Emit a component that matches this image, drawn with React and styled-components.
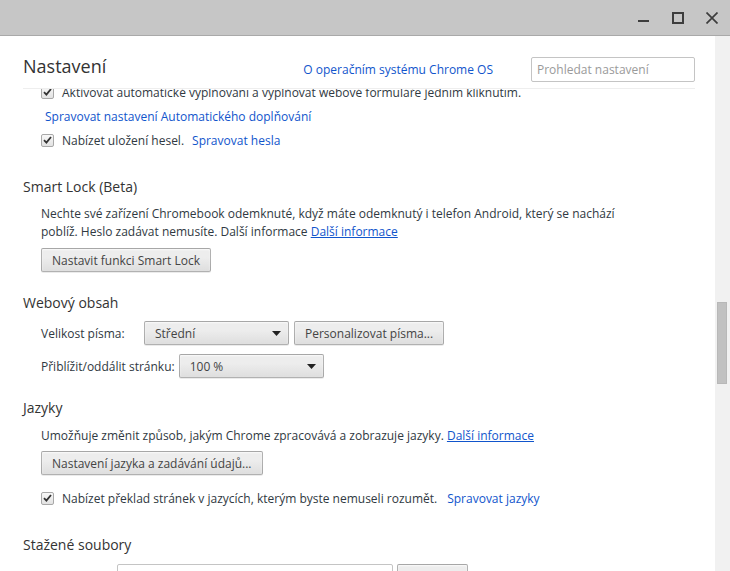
import React from 'react';
import styled, { createGlobalStyle } from 'styled-components';

const Global = createGlobalStyle`
  html, body { margin: 0; padding: 0; width: 730px; height: 571px; overflow: hidden; background: #fff; }
  body { font-family: "Open Sans", "Noto Sans", sans-serif; font-size: 12px; color: #303942; }
  * { box-sizing: border-box; }
`;

const Window = styled.div`
  width: 730px;
  height: 571px;
  display: flex;
  flex-direction: column;
  overflow: hidden;
`;

const TitleBar = styled.div`
  flex: none;
  height: 36px;
  background: #c6c6c6;
  border-bottom: 1px solid #a9a9a9;
  display: flex;
  justify-content: flex-end;
  align-items: center;
  padding-right: 1px;
`;

const WinButton = styled.div`
  width: 34px;
  height: 35px;
  display: flex;
  align-items: center;
  justify-content: center;
  color: #3d3d3d;
`;

const Main = styled.div`
  flex: 1;
  min-height: 0;
  display: flex;
`;

const Content = styled.div`
  flex: 1;
  min-width: 0;
  display: flex;
  flex-direction: column;
  overflow: hidden;
`;

const Header = styled.header`
  flex: none;
  height: 53px;
  margin: 0 20px 0 23px;
  padding-top: 21px;
  border-bottom: 1px solid #eeeeee;
  display: flex;
  align-items: flex-start;
  background: #fff;
  position: relative;
  z-index: 1;
`;

const Title = styled.h1`
  margin: -3px 0 0;
  font-size: 18px;
  font-weight: 400;
  line-height: 25px;
  color: #333;
`;

const HeaderLink = styled.a`
  margin-left: auto;
  line-height: 25px;
  color: #15c;
  text-decoration: none;
`;

const Search = styled.input`
  margin-left: 38px;
  width: 164px;
  height: 25px;
  border: 1px solid #c4c4c4;
  border-radius: 2px;
  padding: 0 5px;
  font: inherit;
  font-size: 12px;
  color: #333;
  outline: none;
  &::placeholder { color: #9a9a9a; }
`;

const Scroller = styled.div`
  flex: 1;
  min-height: 0;
  overflow: hidden;
`;

const Inner = styled.div`
  margin-top: -9px;
`;

const Section = styled.section`
  padding-top: ${p => p.$top || 0}px;
`;

const SectionTitle = styled.h3`
  margin: 0 0 ${p => p.$gap || 8}px 23px;
  font-size: 14px;
  font-weight: 400;
  line-height: 20px;
  color: #333;
`;

const Body = styled.div`
  padding-left: 41px;
  display: flex;
  flex-direction: column;
  align-items: flex-start;
`;

const CheckRow = styled.div`
  display: flex;
  align-items: center;
  height: ${p => p.$h || 24}px;
  margin-top: ${p => p.$mt || 0}px;
  white-space: nowrap;
`;

const Box = styled.span`
  flex: none;
  width: 13px;
  height: 13px;
  margin-right: 8px;
  border: 1px solid #a8a8a8;
  border-radius: 2px;
  background: linear-gradient(#f8f8f8, #e2e2e2);
  display: flex;
  align-items: center;
  justify-content: center;
`;

const Link = styled.a`
  color: #15c;
  text-decoration: ${p => (p.$underline ? 'underline' : 'none')};
  margin-left: ${p => p.$ml || 0}px;
  white-space: nowrap;
`;

const LinkRow = styled.div`
  height: ${p => p.$h || 23}px;
  display: flex;
  align-items: center;
  margin-left: 4px;
`;

const Para = styled.p`
  margin: 0;
  max-width: 600px;
  line-height: 18px;
`;

const Button = styled.button`
  height: 24px;
  margin-top: ${p => p.$mt || 0}px;
  margin-left: ${p => p.$ml || 0}px;
  padding: 0 10px;
  font: inherit;
  font-size: 12px;
  color: #444;
  border: 1px solid rgba(0, 0, 0, 0.25);
  border-radius: 2px;
  background: linear-gradient(#ededed, #ededed 38%, #dedede);
  box-shadow: 0 1px 0 rgba(0, 0, 0, 0.08), inset 0 1px 2px rgba(255, 255, 255, 0.75);
  white-space: nowrap;
`;

const FieldRow = styled.div`
  display: flex;
  align-items: ${p => p.$align || 'center'};
  margin-top: ${p => p.$mt || 0}px;
`;

const Label = styled.span`
  min-width: ${p => p.$min || 0}px;
  margin-right: ${p => p.$mr || 0}px;
  padding-top: ${p => p.$pt || 0}px;
  white-space: nowrap;
`;

const Select = styled.div`
  width: 145px;
  height: 24px;
  padding: 0 7px 0 10px;
  display: flex;
  align-items: center;
  justify-content: space-between;
  color: #444;
  border: 1px solid rgba(0, 0, 0, 0.25);
  border-radius: 2px;
  background: linear-gradient(#ededed, #ededed 38%, #dedede);
  box-shadow: 0 1px 0 rgba(0, 0, 0, 0.08), inset 0 1px 2px rgba(255, 255, 255, 0.75);
`;

const PathInput = styled.div`
  width: 276px;
  height: 24px;
  border: 1px solid #c4c4c4;
  border-radius: 2px;
`;

const ScrollTrack = styled.div`
  flex: none;
  width: 15px;
  background: #f1f1f1;
  padding: 266px 0 0 2px;
`;

const Thumb = styled.div`
  width: 10px;
  height: 82px;
  background: #c1c1c1;
  border: 1px solid #b8b8b8;
`;

const Check = () => (
  <Box>
    <svg width="9" height="8" viewBox="0 0 9 8">
      <path d="M1 4.2 L3.4 6.6 L8 1" fill="none" stroke="#333" strokeWidth="1.8" />
    </svg>
  </Box>
);

const Arrow = () => (
  <svg width="9" height="5" viewBox="0 0 9 5">
    <path d="M0 0 H9 L4.5 5 Z" fill="#222" />
  </svg>
);

export default function App() {
  return (
    <Window>
      <Global />
      <TitleBar>
        <WinButton>
          <svg width="12" height="12" viewBox="0 0 12 12">
            <rect x="0" y="8" width="11" height="2" fill="currentColor" />
          </svg>
        </WinButton>
        <WinButton>
          <svg width="12" height="12" viewBox="0 0 12 12">
            <rect x="1" y="1" width="10" height="10" fill="none" stroke="currentColor" strokeWidth="2" />
          </svg>
        </WinButton>
        <WinButton>
          <svg width="12" height="12" viewBox="0 0 12 12">
            <path d="M0.5 0.5 L11.5 11.5 M11.5 0.5 L0.5 11.5" stroke="currentColor" strokeWidth="1.7" />
          </svg>
        </WinButton>
      </TitleBar>
      <Main>
        <Content>
          <Header>
            <Title>Nastavení</Title>
            <HeaderLink>O operačním systému Chrome OS</HeaderLink>
            <Search placeholder="Prohledat nastavení" />
          </Header>
          <Scroller>
            <Inner>
              <Section>
                <Body>
                  <CheckRow $h={24}>
                    <Check />
                    Aktivovat automatické vyplňování a vyplňovat webové formuláře jedním kliknutím.
                  </CheckRow>
                  <LinkRow $h={24}>
                    <Link>Spravovat nastavení Automatického doplňování</Link>
                  </LinkRow>
                  <CheckRow $h={24}>
                    <Check />
                    Nabízet uložení hesel.
                    <Link $ml={8}>Spravovat hesla</Link>
                  </CheckRow>
                </Body>
              </Section>

              <Section $top={25}>
                <SectionTitle $gap={8}>Smart Lock (Beta)</SectionTitle>
                <Body>
                  <Para>
                    Nechte své zařízení Chromebook odemknuté, když máte odemknutý i telefon Android, který se nachází poblíž. Heslo zadávat nemusíte. Další informace <Link $underline>Další informace</Link>
                  </Para>
                  <Button $mt={7}>Nastavit funkci Smart Lock</Button>
                </Body>
              </Section>

              <Section $top={21}>
                <SectionTitle $gap={8}>Webový obsah</SectionTitle>
                <Body>
                  <FieldRow>
                    <Label $min={103}>Velikost písma:</Label>
                    <Select>Střední<Arrow /></Select>
                    <Button $ml={5}>Personalizovat písma...</Button>
                  </FieldRow>
                  <FieldRow $mt={9}>
                    <Label $mr={4}>Přiblížit/oddálit stránku:</Label>
                    <Select>100 %<Arrow /></Select>
                  </FieldRow>
                </Body>
              </Section>

              <Section $top={20}>
                <SectionTitle $gap={9}>Jazyky</SectionTitle>
                <Body>
                  <Para>
                    Umožňuje změnit způsob, jakým Chrome zpracovává a zobrazuje jazyky. <Link $underline>Další informace</Link>
                  </Para>
                  <Button $mt={6}>Nastavení jazyka a zadávání údajů...</Button>
                  <CheckRow $h={24} $mt={11}>
                    <Check />
                    Nabízet překlad stránek v jazycích, kterým byste nemuseli rozumět.
                    <Link $ml={10}>Spravovat jazyky</Link>
                  </CheckRow>
                </Body>
              </Section>

              <Section $top={25}>
                <SectionTitle $gap={9}>Stažené soubory</SectionTitle>
                <Body>
                  <FieldRow $align="flex-start">
                    <Label $min={76} $pt={8}>Umístění:</Label>
                    <PathInput />
                    <Button $ml={4}>Změnit...</Button>
                  </FieldRow>
                </Body>
              </Section>
            </Inner>
          </Scroller>
        </Content>
        <ScrollTrack>
          <Thumb />
        </ScrollTrack>
      </Main>
    </Window>
  );
}
